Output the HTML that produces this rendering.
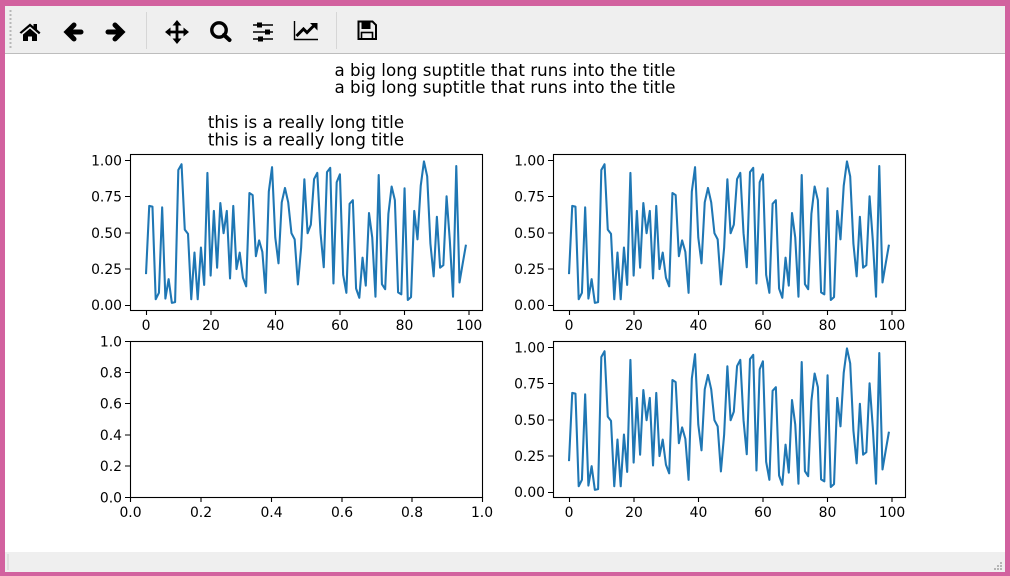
<!DOCTYPE html>
<html><head><meta charset="utf-8"><style>
html,body{margin:0;padding:0;width:1010px;height:576px;overflow:hidden;background:#d2629f}
svg{display:block}
text{font-family:"DejaVu Sans",sans-serif;fill:#000}
.b{font-size:16.67px;text-anchor:middle;letter-spacing:.05px}
.x text{text-anchor:middle;font-size:13.9px}
.y text{text-anchor:end;font-size:13.9px}
</style></head><body>
<svg width="1010" height="576" viewBox="0 0 1010 576" xmlns="http://www.w3.org/2000/svg">
<defs>
<polyline id="d" fill="none" stroke="#1f77b4" stroke-width="2.08" stroke-linejoin="round" vector-effect="non-scaling-stroke" transform="translate(146,305) scale(3.232,-143.6)" points="0,.215 1,.69 2,.685 3,.04 4,.085 5,.68 6,.045 7,.18 8,.015 9,.02 10,.94 11,.98 12,.525 13,.495 14,.04 15,.365 16,.04 17,.4 18,.14 19,.92 20,.205 21,.655 22,.26 23,.71 24,.5 25,.655 26,.185 27,.69 28,.25 29,.365 30,.19 31,.13 32,.78 33,.765 34,.34 35,.45 36,.37 37,.085 38,.79 39,.96 40,.47 41,.29 42,.715 43,.815 44,.715 45,.5 46,.457 47,.143 48,.4 49,.875 50,.5 51,.56 52,.877 53,.92 54,.5 55,.263 56,.925 57,.955 58,.15 59,.855 60,.91 61,.21 62,.085 63,.705 64,.73 65,.115 66,.05 67,.33 68,.135 69,.64 70,.47 71,.058 72,.905 73,.145 74,.11 75,.635 76,.825 77,.73 78,.088 79,.074 80,.813 81,.035 82,.055 83,.655 84,.457 85,.83 86,1 87,.896 88,.427 89,.2 90,.614 91,.26 92,.277 93,.757 94,.45 95,.058 96,.968 97,.157 98,.29 99,.42"/>
<g id="ax">
<use href="#d"/>
<rect x="130.500" y="154.500" width="352" height="156" fill="none" stroke="#000" stroke-width="1.100"/>
<path d="M146.500 310v5M211 310v5M275.500 310v5M340 310v5M404.500 310v5M469 310v5M125 305.500h5M125 269h5M125 233h5M125 196.500h5M125 160.500h5" stroke="#000" stroke-width="1.100" fill="none"/>
<g class="x"><text x="146" y="330">0</text><text x="211" y="330">20</text><text x="275.500" y="330">40</text><text x="340" y="330">60</text><text x="404.500" y="330">80</text><text x="469" y="330">100</text></g>
<g class="y"><text x="122" y="310">0.00</text><text x="122" y="274">0.25</text><text x="122" y="238">0.50</text><text x="122" y="201.500">0.75</text><text x="122" y="165.500">1.00</text></g>
</g>
</defs>
<rect x="0" y="0" width="1010" height="576" fill="#d2629f"/>
<rect x="5" y="6" width="1000" height="566" fill="#fff"/>
<rect x="5" y="6" width="1000" height="47" fill="#efefef"/>
<rect x="5" y="53" width="1000" height="1" fill="#bdbdbd"/>
<path d="M10.500 10v38" stroke="#b8b8b8" stroke-width="2" stroke-dasharray="2 2"/>
<path d="M146.500 12v37M336.500 12v37" stroke="#d6d6d6" stroke-width="1"/>

<path d="M19.500 32.500 30 23.500l3.500 3v-2.500h3.500v5.500l3.500 3-1.500 1.800L30 26.500l-8.800 7.300zM23 34.500l7-6 7 6V41h-5v-4.500h-4V41h-5z" fill="#000"/>
<path d="M81 32H69M74 25 67 32l7 7" fill="none" stroke="#000" stroke-width="5" stroke-linecap="round" stroke-linejoin="miter"/>
<path d="M108 32h12M115 25 122 32l-7 7" fill="none" stroke="#000" stroke-width="5" stroke-linecap="round" stroke-linejoin="miter"/>
<path d="M177 23v18M168 32h18" stroke="#000" stroke-width="2.800"/>
<path d="M177 20 181.500 25.500H172.500zM177 44 172.500 38.500h9zM165 32l5.500-4.500v9zM189 32l-5.500-4.500v9z" fill="#000"/>
<circle cx="219" cy="30" r="7.200" fill="none" stroke="#000" stroke-width="3.400"/>
<path d="M224 35l5.500 5" stroke="#000" stroke-width="4" stroke-linecap="round"/>
<path d="M253 25h20M253 32h20M253 39h20" stroke="#000" stroke-width="1.500"/>
<rect x="257" y="22.500" width="5" height="5" fill="#000"/><rect x="265" y="29.500" width="5" height="5" fill="#000"/><rect x="258" y="36.500" width="5" height="5" fill="#000"/>
<path d="M294.500 21v18.500H318" fill="none" stroke="#000" stroke-width="1.400"/>
<path d="M296.500 36l7-7 3.500 3.500 7-7" fill="none" stroke="#000" stroke-width="3"/>
<path d="M310 23h7.500v7.500z" fill="#000"/>
<path d="M358.500 21.500h14l3.500 3.500v14h-17.500z" fill="none" stroke="#000" stroke-width="2"/>
<rect x="361.500" y="22" width="9" height="7" fill="#000"/>
<rect x="361.500" y="32.500" width="11" height="6.500" fill="none" stroke="#000" stroke-width="1.600"/>

<text class="b" x="505" y="76">a big long suptitle that runs into the title</text>
<text class="b" x="505" y="93">a big long suptitle that runs into the title</text>
<text class="b" x="306" y="128">this is a really long title</text>
<text class="b" x="306" y="145.500">this is a really long title</text>

<use href="#ax"/>
<use href="#ax" x="423"/>
<use href="#ax" x="423" y="187"/>

<rect x="130.500" y="341.500" width="352" height="156" fill="none" stroke="#000" stroke-width="1.100"/>
<path d="M130.500 497v5M201 497v5M271.500 497v5M342 497v5M412 497v5M482.500 497v5M125 497.500h5M125 466h5M125 435h5M125 403.500h5M125 372.500h5M125 341.500h5" stroke="#000" stroke-width="1.100" fill="none"/>
<g class="x"><text x="130.500" y="517">0.0</text><text x="201" y="517">0.2</text><text x="271.500" y="517">0.4</text><text x="342" y="517">0.6</text><text x="412" y="517">0.8</text><text x="482" y="517">1.0</text></g>
<g class="y"><text x="122" y="502.500">0.0</text><text x="122" y="471">0.2</text><text x="122" y="440">0.4</text><text x="122" y="408.500">0.6</text><text x="122" y="377.500">0.8</text><text x="122" y="346.500">1.0</text></g>

<rect x="5" y="552" width="1000" height="20" fill="#efefef"/>
<path d="M8 554v16" stroke="#cfcfcf" stroke-width="1"/>
<path d="M1000 562h2v2h-2zM997 565h2v2h-2zM1000 565h2v2h-2zM994 568h2v2h-2zM997 568h2v2h-2zM1000 568h2v2h-2z" fill="#b5b5b5"/>
</svg>
</body></html>
